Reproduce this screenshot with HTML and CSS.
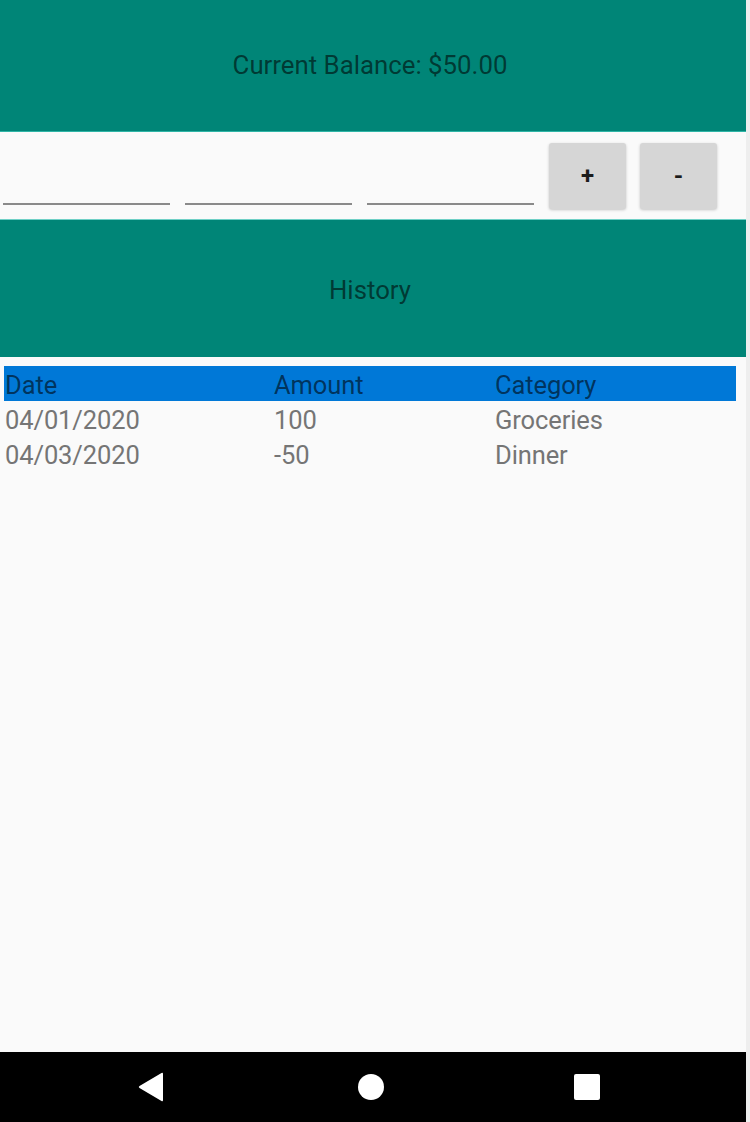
FILE: index.html
```html
<!DOCTYPE html>
<html>
<head>
<meta charset="utf-8">
<link rel="stylesheet" href="styles.css">
</head>
<body>
<div class="app">
  <div class="banner banner-top"><span class="banner-text">Current Balance: $50.00</span></div>
  <div class="entry-row">
    <div class="field"></div>
    <div class="field"></div>
    <div class="field"></div>
    <button class="btn">+</button>
    <button class="btn">-</button>
  </div>
  <div class="banner banner-history"><span class="banner-text">History</span></div>
  <div class="table">
    <div class="trow thead">
      <span>Date</span><span>Amount</span><span>Category</span>
    </div>
    <div class="trow">
      <span>04/01/2020</span><span>100</span><span>Groceries</span>
    </div>
    <div class="trow">
      <span>04/03/2020</span><span>-50</span><span>Dinner</span>
    </div>
  </div>
  <div class="spacer"></div>
  <div class="navbar">
    <svg class="nav-icon" width="28" height="30" viewBox="0 0 28 30"><path d="M26 2 L26 28 Q26 30 24.5 29 L2.5 16 Q1 15 2.5 14 L24.5 1 Q26 0 26 2 Z" fill="#fff"/></svg>
    <svg class="nav-icon" width="28" height="28" viewBox="0 0 28 28"><circle cx="14" cy="14" r="13" fill="#fff"/></svg>
    <svg class="nav-icon" width="28" height="28" viewBox="0 0 28 28"><rect x="1" y="1" width="26" height="26" rx="2" fill="#fff"/></svg>
  </div>
</div>
</body>
</html>
```

FILE: styles.css
```css
html, body {
  margin: 0;
  padding: 0;
}
body {
  background: #eeeeee;
  font-family: Roboto, "Liberation Sans", sans-serif;
}
.app {
  width: 746px;
  height: 1122px;
  background: #fafafa;
  display: flex;
  flex-direction: column;
}
.banner {
  background: #008577;
  display: flex;
  align-items: center;
  justify-content: center;
  padding-right: 6px;
}
.banner-top {
  height: 131px;
  border-bottom: 1px solid #2fb5a6;
}
.banner-history {
  height: 137px;
  border-top: 1px solid #6fd0c6;
}
.banner-text {
  font-size: 25.8px;
  color: rgba(0, 0, 0, 0.58);
  position: relative;
  top: -1px;
}
.banner-history .banner-text {
  top: 1px;
}
.entry-row {
  height: 87px;
  display: flex;
  align-items: flex-start;
  padding-left: 3px;
  box-sizing: border-box;
}
.field {
  width: 167px;
  height: 73px;
  border-bottom: 2px solid #8a8a8a;
  margin-right: 15px;
  box-sizing: border-box;
}
.btn {
  width: 77px;
  height: 66px;
  margin-top: 11px;
  margin-right: 14px;
  border: none;
  border-radius: 3px;
  background: #d6d6d6;
  box-shadow: 0 1px 3px rgba(0, 0, 0, 0.22);
  font-family: Roboto, "Liberation Sans", sans-serif;
  font-size: 24px;
  font-weight: 700;
  color: #1c1c1c;
  padding: 0;
}
.table {
  margin: 9px 10px 0 4px;
}
.trow {
  display: grid;
  grid-template-columns: 269px 221px 1fr;
  height: 35px;
  align-items: center;
  font-size: 25.5px;
  color: #757575;
  letter-spacing: -0.1px;
}
.trow span {
  padding-left: 1px;
  position: relative;
  top: 1px;
}
.thead {
  background: #0078d7;
  color: rgba(0, 0, 0, 0.58);
}
.spacer {
  flex: 1;
}
.navbar {
  height: 70px;
  background: #000;
  display: flex;
  align-items: center;
}
.nav-icon:nth-child(1) {
  margin-left: 137px;
}
.nav-icon:nth-child(2) {
  margin-left: 192px;
}
.nav-icon:nth-child(3) {
  margin-left: 188px;
}
```
